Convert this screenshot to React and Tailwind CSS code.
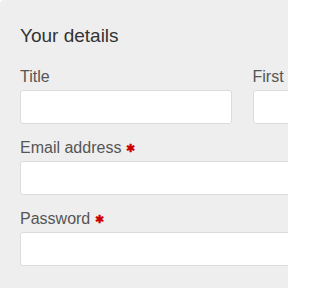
function Field({ label, required, className }) {
    return (
        <div className={className}>
            <label className="block text-[16px] leading-5 text-[#555] mb-[3px] whitespace-nowrap">
                {label}
                {required && <span className="ml-[5px] text-[11px] text-[#cc0000] align-[1px] font-bold">✱</span>}
            </label>
            <input
                type="text"
                className="block w-full h-[34px] bg-white border border-[#dcdcdc] rounded-[3px] outline-none"
            />
        </div>
    );
}

export default function App() {
    return (
        <div className="w-[288px] h-[288px] overflow-hidden bg-white" style={{ fontFamily: '"Liberation Sans", Arial, sans-serif' }}>
            <div className="w-[484px] min-h-[288px] bg-[#eeeeee] rounded-tl-[4px] pt-6 pl-5 pr-5">
                <h2 className="text-[19px] leading-6 text-[#333] mb-[19px]">Your details</h2>
                <div className="grid grid-cols-2 gap-x-[21px]">
                    <Field label="Title" />
                    <Field label="First name" />
                </div>
                <Field label="Email address" required className="mt-[14px]" />
                <Field label="Password" required className="mt-[14px]" />
            </div>
        </div>
    );
}
